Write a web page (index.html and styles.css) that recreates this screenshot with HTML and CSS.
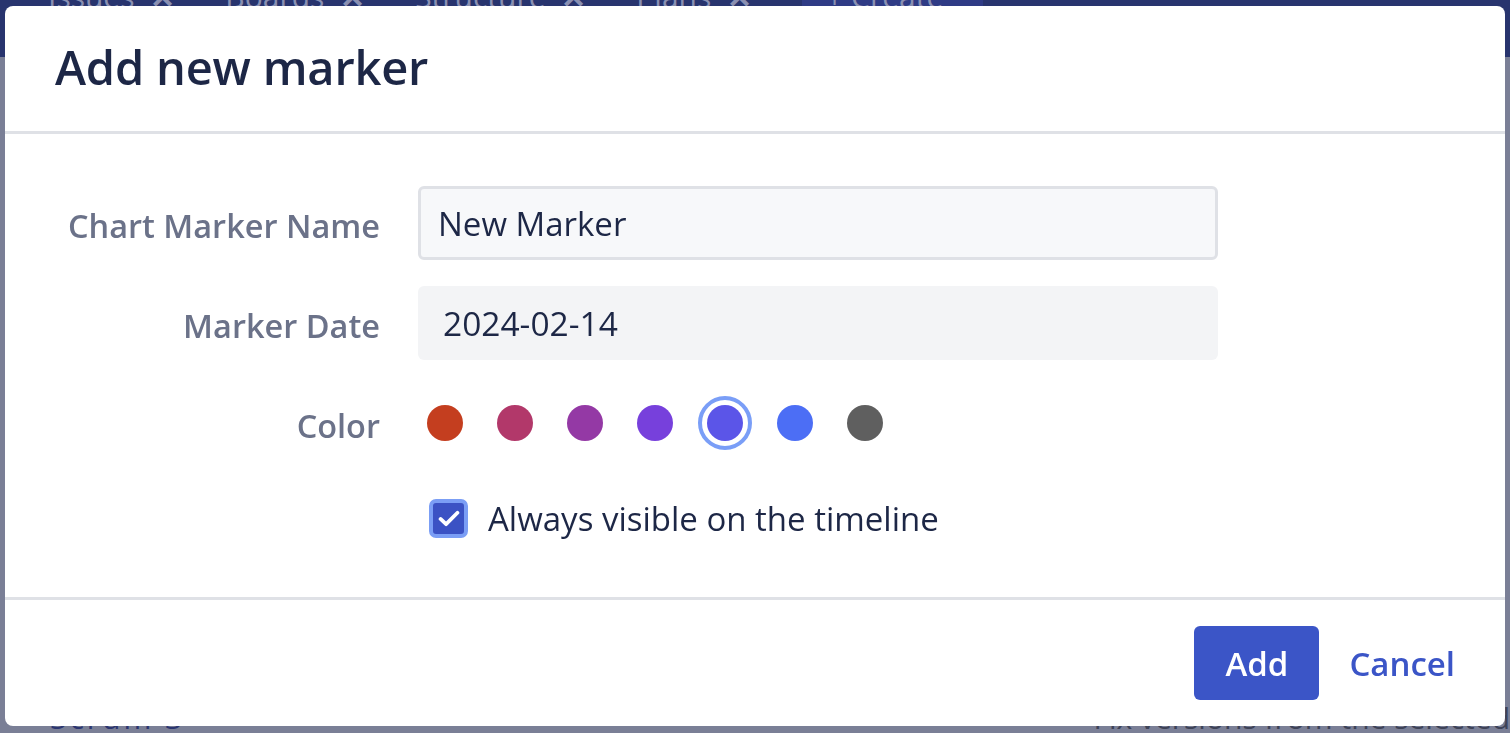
FILE: index.html
```html
<!DOCTYPE html>
<html lang="en">
<head>
    <meta charset="UTF-8">
    <meta name="viewport" content="width=device-width, initial-scale=1.0">
    <title>Add new marker</title>
    <link rel="stylesheet" href="styles.css">
</head>
<body>
    <!-- page behind the dialog (dimmed) -->
    <div class="page">
        <div class="topnav">
            <span class="nav-item">Issues <b>✕</b></span>
            <span class="nav-item">Boards <b>✕</b></span>
            <span class="nav-item">Structure <b>✕</b></span>
            <span class="nav-item">Plans <b>✕</b></span>
            <span class="nav-item create">+ Create</span>
        </div>
        <div class="page-bottom">
            <span class="bg-title">Scrum 3</span>
            <span class="bg-text">Fix versions from the selected</span>
        </div>
    </div>

    <div class="modal">
        <div class="modal-header">
            <h1>Add new marker</h1>
        </div>
        <form class="modal-body">
            <label class="field-label" for="markerName">Chart Marker Name</label>
            <div class="field">
                <input type="text" id="markerName" class="text-input" value="New Marker">
            </div>

            <label class="field-label" for="markerDate">Marker Date</label>
            <div class="field">
                <div id="markerDate" class="date-input">2024-02-14</div>
            </div>

            <span class="field-label">Color</span>
            <div class="field swatches">
                <span class="swatch"><span class="dot c-red"></span></span>
                <span class="swatch"><span class="dot c-rose"></span></span>
                <span class="swatch"><span class="dot c-magenta"></span></span>
                <span class="swatch"><span class="dot c-violet"></span></span>
                <span class="swatch selected"><span class="dot c-indigo"></span></span>
                <span class="swatch"><span class="dot c-blue"></span></span>
                <span class="swatch"><span class="dot c-gray"></span></span>
            </div>

            <span></span>
            <div class="field check-row">
                <span class="checkbox">
                    <svg viewBox="0 0 16 16" width="26" height="26">
                        <path d="M2.8 8.6l3.4 3.2 7-7" fill="none" stroke="#fff" stroke-width="2.3" stroke-linecap="round" stroke-linejoin="round"/>
                    </svg>
                </span>
                <span class="check-label">Always visible on the timeline</span>
            </div>
        </form>
        <div class="modal-footer">
            <button type="button" class="btn btn-primary">Add</button>
            <button type="button" class="btn btn-link">Cancel</button>
        </div>
    </div>
</body>
</html>
```

FILE: styles.css
```css
body {
    margin: 0;
    padding: 0;
    font-family: "Open Sans", "Noto Sans", Arial, sans-serif;
    background-color: #7a7f96;
    height: 733px;
    overflow: hidden;
}
.page {
    height: 733px;
    display: flex;
    flex-direction: column;
    justify-content: space-between;
}
.topnav {
    height: 57px;
    background-color: #28346e;
    display: flex;
    align-items: flex-start;
    gap: 50px;
    padding-left: 48px;
    color: #8a90b2;
    font-size: 30px;
}
.nav-item {
    margin-top: -24px;
    white-space: nowrap;
}
.nav-item b {
    margin-left: 8px;
}
.create {
    background-color: #2f3b85;
    padding: 0 40px 0 24px;
}
.page-bottom {
    height: 40px;
    display: flex;
    justify-content: space-between;
    padding-left: 50px;
    font-size: 30px;
    color: #2c3670;
}
.bg-title {
    margin-top: 4px;
    letter-spacing: 3px;
}
.bg-text {
    margin-top: 4px;
    color: #3e4358;
}

/* dialog */
.modal {
    position: fixed;
    left: 5px;
    top: 6px;
    width: 1500px;
    height: 720px;
    background-color: #fff;
    border-radius: 8px;
    display: flex;
    flex-direction: column;
    overflow: hidden;
}
.modal-header {
    height: 125px;
    border-bottom: 3px solid #dfe1e6;
    display: flex;
    align-items: center;
    padding-left: 50px;
}
.modal-header h1 {
    margin: 0 0 4px;
    font-size: 47px;
    font-weight: 600;
    color: #1d2746;
    letter-spacing: -0.2px;
}
.modal-body {
    flex: 1;
    margin: 0;
    padding-top: 39px;
    display: grid;
    grid-template-columns: 375px 800px;
    grid-template-rows: 100px 100px 100px 90px;
    column-gap: 38px;
    align-items: center;
    align-content: start;
}
.field-label {
    text-align: right;
    font-size: 32.5px;
    font-weight: 600;
    color: #6b7289;
    padding-top: 4px;
}
.field {
    display: flex;
    align-items: center;
}
.text-input {
    width: 100%;
    height: 74px;
    box-sizing: border-box;
    border: 3px solid #dfe1e6;
    border-radius: 6px;
    background-color: #f7f8fa;
    padding: 0 17px;
    font-family: inherit;
    font-size: 33px;
    color: #1d2746;
    outline: none;
}
.date-input {
    width: 100%;
    height: 74px;
    box-sizing: border-box;
    border-radius: 6px;
    background-color: #f3f4f6;
    padding: 0 25px;
    display: flex;
    align-items: center;
    font-size: 33.5px;
    color: #1d2746;
}
.swatches {
    gap: 16px;
}
.swatch {
    width: 54px;
    height: 54px;
    box-sizing: border-box;
    border-radius: 50%;
    display: flex;
    align-items: center;
    justify-content: center;
}
.swatch.selected {
    border: 4px solid #7a9ef7;
}
.dot {
    width: 36px;
    height: 36px;
    border-radius: 50%;
}
.c-red { background-color: #c43e1f; }
.c-rose { background-color: #b2386a; }
.c-magenta { background-color: #9439a5; }
.c-violet { background-color: #7740dc; }
.c-indigo { background-color: #5b55e8; }
.c-blue { background-color: #4c6ef5; }
.c-gray { background-color: #5f5f5f; }

.check-row {
    padding-left: 11px;
    gap: 20px;
}
.checkbox {
    width: 39px;
    height: 39px;
    box-sizing: border-box;
    border: 4px solid #7b9ef5;
    border-radius: 7px;
    background-color: #3b52c4;
    display: flex;
    align-items: center;
    justify-content: center;
}
.check-label {
    font-size: 33px;
    color: #1d2746;
}

.modal-footer {
    height: 126px;
    border-top: 3px solid #dfe1e6;
    display: flex;
    align-items: center;
    justify-content: flex-end;
    padding-right: 50px;
    gap: 30px;
}
.btn {
    font-family: inherit;
    font-size: 33px;
    font-weight: 600;
    border: none;
    cursor: pointer;
}
.btn-primary {
    width: 125px;
    height: 74px;
    border-radius: 6px;
    background-color: #3b55c7;
    color: #fff;
}
.btn-link {
    background: none;
    padding: 0;
    color: #3b55c7;
}
```
